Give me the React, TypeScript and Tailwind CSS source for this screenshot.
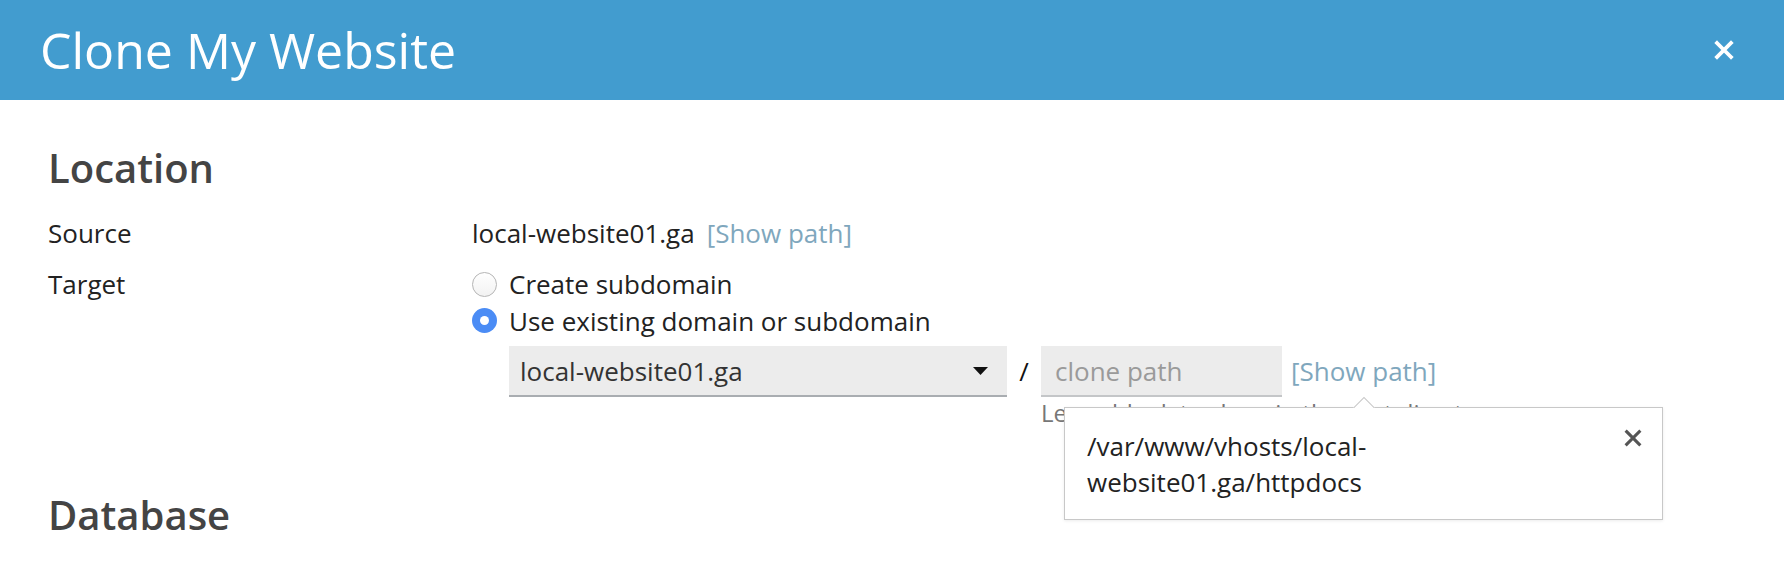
import React from "react";

function CloseIcon({ size, stroke, color }: { size: number; stroke: number; color: string }) {
  return (
    <svg width={size} height={size} viewBox="0 0 20 20" fill="none">
      <path d="M3 3 L17 17 M17 3 L3 17" stroke={color} strokeWidth={stroke} strokeLinecap="square" />
    </svg>
  );
}

export default function App() {
  return (
    <div className="w-[1784px] h-[562px] overflow-hidden bg-white font-['Open_Sans',sans-serif] text-[#222]">
      <div className="h-[100px] bg-[#429ccf] flex items-center justify-between pl-[40px] pr-[50px]">
        <h1 className="text-[50px] leading-[60px] text-white font-normal">Clone My Website</h1>
        <button className="w-[20px] h-[20px] flex items-center justify-center">
          <CloseIcon size={20} stroke={3.8} color="#ffffff" />
        </button>
      </div>

      <div className="pl-[48px] pt-[44px]">
        <h2 className="text-[40px] leading-[48px] font-semibold text-[#444]">Location</h2>

        <div className="mt-[23px] flex text-[26px] leading-[36px]">
          <div className="w-[424px]">Source</div>
          <div className="flex items-center gap-[12px]">
            <span>local-website01.ga</span>
            <span className="text-[#7fa7bd]">[Show path]</span>
          </div>
        </div>

        <div className="mt-[15px] flex text-[26px] leading-[36px]">
          <div className="w-[424px]">Target</div>
          <div className="flex flex-col">
            <label className="flex items-center gap-[12px] h-[36px]">
              <span className="w-[25px] h-[25px] rounded-full border border-[#b5b5b5] bg-gradient-to-b from-white to-[#f2f2f2]" />
              <span>Create subdomain</span>
            </label>
            <label className="flex items-center gap-[12px] h-[37px]">
              <span className="w-[25px] h-[25px] rounded-full bg-[#4b8cf5] flex items-center justify-center">
                <span className="w-[9px] h-[9px] rounded-full bg-white" />
              </span>
              <span>Use existing domain or subdomain</span>
            </label>

            <div className="ml-[37px] mt-[7px] flex items-start">
              <div className="flex flex-col">
                <div className="flex items-start">
                  <div className="w-[498px] h-[51px] bg-[#ececec] border-b-2 border-[#a9adb1] flex items-center justify-between pl-[11px] pr-[19px] text-[#333]">
                    <span>local-website01.ga</span>
                    <svg width="15" height="8" viewBox="0 0 15 8">
                      <path d="M0 0 L15 0 L7.5 8 Z" fill="#111" />
                    </svg>
                  </div>
                  <span className="w-[34px] h-[49px] flex items-center justify-center text-[#111]">/</span>
                  <div className="flex flex-col">
                    <div className="w-[241px] h-[51px] bg-[#ececec] border-b-2 border-[#c4c6c8] flex items-center pl-[14px] text-[#9a9a9a]">
                      clone path
                    </div>
                  </div>
                  <div className="relative ml-[9px] h-[49px] flex items-center">
                    <span className="text-[#7fa7bd]">[Show path]</span>
                    <div className="absolute left-[-227px] top-[61px] w-[599px] h-[113px] bg-white border border-[#c8c8c8] shadow-[0_1px_3px_rgba(0,0,0,0.08)] z-10 pl-[22px] pt-[20px] text-[26px] leading-[36px] text-[#222]">
                      <div className="absolute left-[285px] top-[-15px] w-[28px] h-[15px] overflow-hidden">
                        <div className="absolute left-[4px] top-[8px] w-[20px] h-[20px] bg-white border border-[#c8c8c8] rotate-45" />
                      </div>
                      <div>/var/www/vhosts/local-</div>
                      <div>website01.ga/httpdocs</div>
                      <button className="absolute right-[19px] top-[20px] w-[20px] h-[20px] flex items-center justify-center">
                        <CloseIcon size={18} stroke={3.4} color="#555" />
                      </button>
                    </div>
                  </div>
                </div>
                <div className="ml-[532px] text-[24px] leading-[32px] text-[#777] whitespace-nowrap">
                  Leave blank to clone in the root directory
                </div>
              </div>
            </div>
          </div>
        </div>

        <h2 className="mt-[62px] text-[40px] leading-[48px] font-semibold text-[#444]">Database</h2>
      </div>
    </div>
  );
}
